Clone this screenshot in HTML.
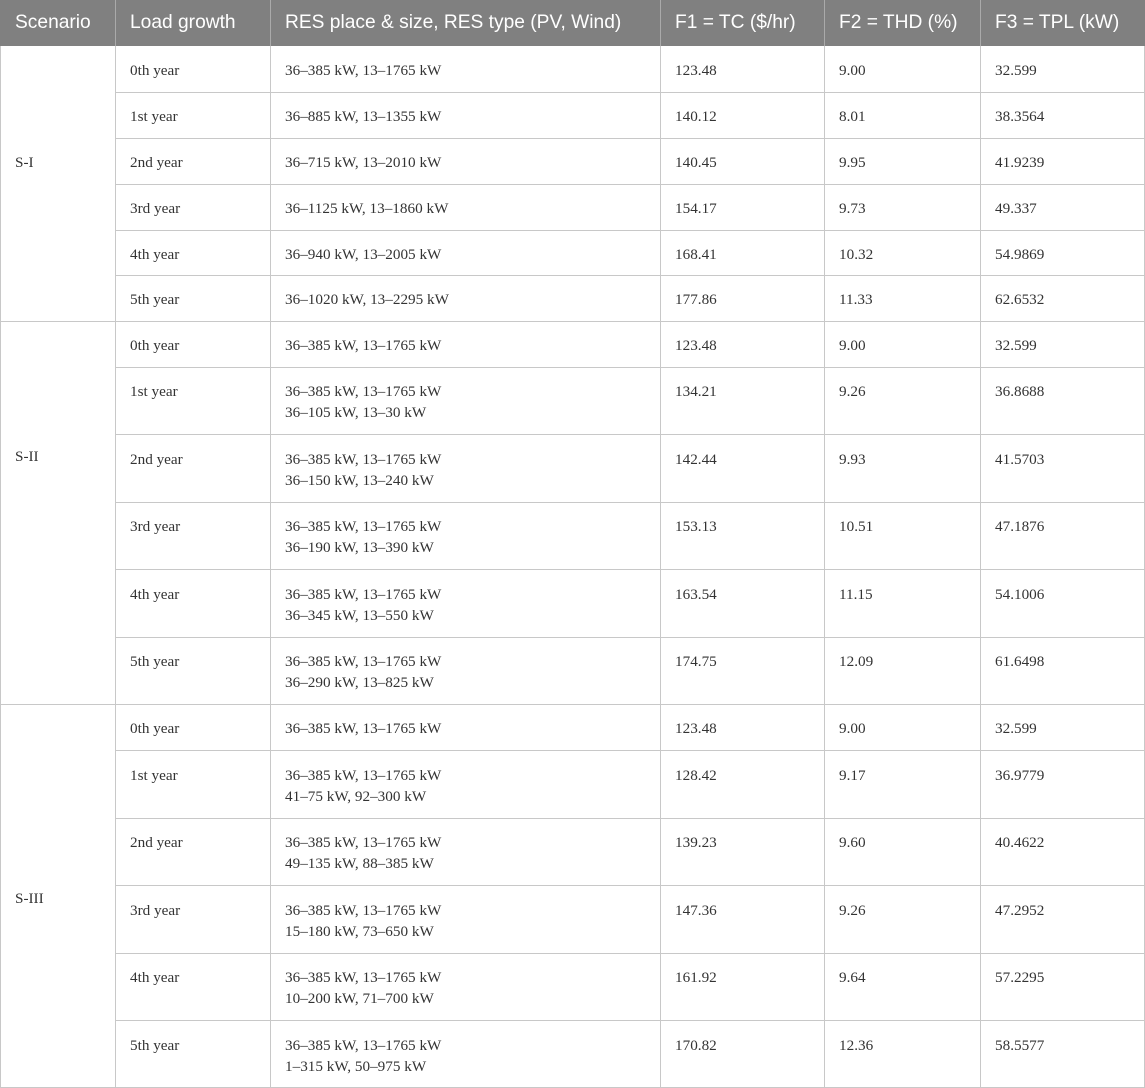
<!DOCTYPE html>
<html><head><meta charset="utf-8"><style>
body{margin:0;width:1145px;height:1088px;position:relative;overflow:hidden;background:#fff;font-family:"Liberation Serif",serif;font-size:15.2px;color:#333}
.h{position:absolute;top:0;left:0;width:1145px;height:46px;background:#808080;color:#fff;font-family:"Liberation Sans",sans-serif;font-size:19.2px;z-index:1}
.h span{position:absolute;top:12px}
.v{position:absolute;top:0;width:1px;height:1088px;background:#c8c8c8}
.r{position:absolute;left:115px;width:1030px;border-top:1px solid #c8c8c8;height:0}
.f{left:0;width:1145px}
.c{position:absolute;line-height:21px;white-space:nowrap;margin-top:1px}
.hv{position:absolute;top:0;width:1px;height:46px;background:#aaa;z-index:2}
</style></head><body>
<div class="v" style="left:0"></div><div class="v" style="left:115px"></div><div class="v" style="left:270px"></div><div class="v" style="left:660px"></div><div class="v" style="left:824px"></div><div class="v" style="left:980px"></div><div class="v" style="left:1144px"></div>
<div class="h"><span style="left:15px">Scenario</span><span style="left:130px">Load growth</span><span style="left:285px">RES place &amp; size, RES type (PV, Wind)</span><span style="left:675px">F1 = TC ($/hr)</span><span style="left:839px">F2 = THD (%)</span><span style="left:995px">F3 = TPL (kW)</span></div>
<div class="hv" style="left:115px"></div><div class="hv" style="left:270px"></div><div class="hv" style="left:660px"></div><div class="hv" style="left:824px"></div><div class="hv" style="left:980px"></div>

<div class="r" style="top:92px"></div><div class="r" style="top:138px"></div><div class="r" style="top:184px"></div><div class="r" style="top:230px"></div><div class="r" style="top:275px"></div>
<div class="r f" style="top:321px"></div>
<div class="r" style="top:367px"></div><div class="r" style="top:434px"></div><div class="r" style="top:502px"></div><div class="r" style="top:569px"></div><div class="r" style="top:637px"></div>
<div class="r f" style="top:704px"></div>
<div class="r" style="top:750px"></div><div class="r" style="top:818px"></div><div class="r" style="top:885px"></div><div class="r" style="top:953px"></div><div class="r" style="top:1020px"></div>
<div class="r f" style="top:1087px"></div>

<div class="c" style="left:15px;top:151px">S-I</div>
<div class="c" style="left:15px;top:445px">S-II</div>
<div class="c" style="left:15px;top:887px">S-III</div>

<div class="c" style="left:130px;top:59px">0th year</div><div class="c" style="left:285px;top:59px">36–385 kW, 13–1765 kW</div><div class="c" style="left:675px;top:59px">123.48</div><div class="c" style="left:839px;top:59px">9.00</div><div class="c" style="left:995px;top:59px">32.599</div>
<div class="c" style="left:130px;top:105px">1st year</div><div class="c" style="left:285px;top:105px">36–885 kW, 13–1355 kW</div><div class="c" style="left:675px;top:105px">140.12</div><div class="c" style="left:839px;top:105px">8.01</div><div class="c" style="left:995px;top:105px">38.3564</div>
<div class="c" style="left:130px;top:151px">2nd year</div><div class="c" style="left:285px;top:151px">36–715 kW, 13–2010 kW</div><div class="c" style="left:675px;top:151px">140.45</div><div class="c" style="left:839px;top:151px">9.95</div><div class="c" style="left:995px;top:151px">41.9239</div>
<div class="c" style="left:130px;top:197px">3rd year</div><div class="c" style="left:285px;top:197px">36–1125 kW, 13–1860 kW</div><div class="c" style="left:675px;top:197px">154.17</div><div class="c" style="left:839px;top:197px">9.73</div><div class="c" style="left:995px;top:197px">49.337</div>
<div class="c" style="left:130px;top:243px">4th year</div><div class="c" style="left:285px;top:243px">36–940 kW, 13–2005 kW</div><div class="c" style="left:675px;top:243px">168.41</div><div class="c" style="left:839px;top:243px">10.32</div><div class="c" style="left:995px;top:243px">54.9869</div>
<div class="c" style="left:130px;top:288px">5th year</div><div class="c" style="left:285px;top:288px">36–1020 kW, 13–2295 kW</div><div class="c" style="left:675px;top:288px">177.86</div><div class="c" style="left:839px;top:288px">11.33</div><div class="c" style="left:995px;top:288px">62.6532</div>

<div class="c" style="left:130px;top:334px">0th year</div><div class="c" style="left:285px;top:334px">36–385 kW, 13–1765 kW</div><div class="c" style="left:675px;top:334px">123.48</div><div class="c" style="left:839px;top:334px">9.00</div><div class="c" style="left:995px;top:334px">32.599</div>
<div class="c" style="left:130px;top:380px">1st year</div><div class="c" style="left:285px;top:380px">36–385 kW, 13–1765 kW<br>36–105 kW, 13–30 kW</div><div class="c" style="left:675px;top:380px">134.21</div><div class="c" style="left:839px;top:380px">9.26</div><div class="c" style="left:995px;top:380px">36.8688</div>
<div class="c" style="left:130px;top:448px">2nd year</div><div class="c" style="left:285px;top:448px">36–385 kW, 13–1765 kW<br>36–150 kW, 13–240 kW</div><div class="c" style="left:675px;top:448px">142.44</div><div class="c" style="left:839px;top:448px">9.93</div><div class="c" style="left:995px;top:448px">41.5703</div>
<div class="c" style="left:130px;top:515px">3rd year</div><div class="c" style="left:285px;top:515px">36–385 kW, 13–1765 kW<br>36–190 kW, 13–390 kW</div><div class="c" style="left:675px;top:515px">153.13</div><div class="c" style="left:839px;top:515px">10.51</div><div class="c" style="left:995px;top:515px">47.1876</div>
<div class="c" style="left:130px;top:583px">4th year</div><div class="c" style="left:285px;top:583px">36–385 kW, 13–1765 kW<br>36–345 kW, 13–550 kW</div><div class="c" style="left:675px;top:583px">163.54</div><div class="c" style="left:839px;top:583px">11.15</div><div class="c" style="left:995px;top:583px">54.1006</div>
<div class="c" style="left:130px;top:650px">5th year</div><div class="c" style="left:285px;top:650px">36–385 kW, 13–1765 kW<br>36–290 kW, 13–825 kW</div><div class="c" style="left:675px;top:650px">174.75</div><div class="c" style="left:839px;top:650px">12.09</div><div class="c" style="left:995px;top:650px">61.6498</div>

<div class="c" style="left:130px;top:717px">0th year</div><div class="c" style="left:285px;top:717px">36–385 kW, 13–1765 kW</div><div class="c" style="left:675px;top:717px">123.48</div><div class="c" style="left:839px;top:717px">9.00</div><div class="c" style="left:995px;top:717px">32.599</div>
<div class="c" style="left:130px;top:764px">1st year</div><div class="c" style="left:285px;top:764px">36–385 kW, 13–1765 kW<br>41–75 kW, 92–300 kW</div><div class="c" style="left:675px;top:764px">128.42</div><div class="c" style="left:839px;top:764px">9.17</div><div class="c" style="left:995px;top:764px">36.9779</div>
<div class="c" style="left:130px;top:831px">2nd year</div><div class="c" style="left:285px;top:831px">36–385 kW, 13–1765 kW<br>49–135 kW, 88–385 kW</div><div class="c" style="left:675px;top:831px">139.23</div><div class="c" style="left:839px;top:831px">9.60</div><div class="c" style="left:995px;top:831px">40.4622</div>
<div class="c" style="left:130px;top:899px">3rd year</div><div class="c" style="left:285px;top:899px">36–385 kW, 13–1765 kW<br>15–180 kW, 73–650 kW</div><div class="c" style="left:675px;top:899px">147.36</div><div class="c" style="left:839px;top:899px">9.26</div><div class="c" style="left:995px;top:899px">47.2952</div>
<div class="c" style="left:130px;top:966px">4th year</div><div class="c" style="left:285px;top:966px">36–385 kW, 13–1765 kW<br>10–200 kW, 71–700 kW</div><div class="c" style="left:675px;top:966px">161.92</div><div class="c" style="left:839px;top:966px">9.64</div><div class="c" style="left:995px;top:966px">57.2295</div>
<div class="c" style="left:130px;top:1034px">5th year</div><div class="c" style="left:285px;top:1034px">36–385 kW, 13–1765 kW<br>1–315 kW, 50–975 kW</div><div class="c" style="left:675px;top:1034px">170.82</div><div class="c" style="left:839px;top:1034px">12.36</div><div class="c" style="left:995px;top:1034px">58.5577</div>
</body></html>
